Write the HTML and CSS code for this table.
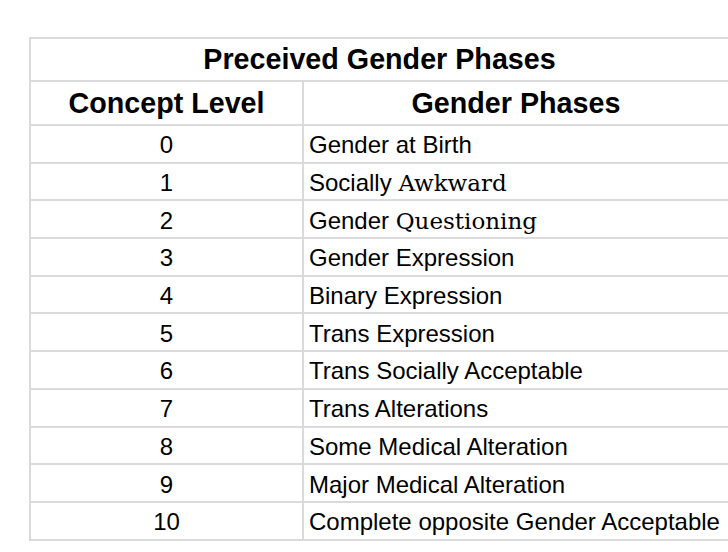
FILE: index.html
```html
<!DOCTYPE html>
<html lang="en">
<head>
<meta charset="utf-8">
<title>Preceived Gender Phases</title>
<link rel="stylesheet" href="styles.css">
</head>
<body>
<table class="phases">
  <colgroup>
    <col class="col-level">
    <col class="col-phase">
  </colgroup>
  <thead>
    <tr class="title-row"><th colspan="2">Preceived Gender Phases</th></tr>
    <tr class="head-row"><th>Concept Level</th><th>Gender Phases</th></tr>
  </thead>
  <tbody>
    <tr><td class="num">0</td><td>Gender at Birth</td></tr>
    <tr><td class="num">1</td><td>Socially <span class="serif">Awkward</span></td></tr>
    <tr><td class="num">2</td><td>Gender <span class="serif">Questioning</span></td></tr>
    <tr><td class="num">3</td><td>Gender Expression</td></tr>
    <tr><td class="num">4</td><td>Binary Expression</td></tr>
    <tr><td class="num">5</td><td>Trans Expression</td></tr>
    <tr><td class="num">6</td><td>Trans Socially Acceptable</td></tr>
    <tr><td class="num">7</td><td>Trans Alterations</td></tr>
    <tr><td class="num">8</td><td>Some Medical Alteration</td></tr>
    <tr><td class="num">9</td><td>Major Medical Alteration</td></tr>
    <tr><td class="num">10</td><td>Complete opposite Gender Acceptable</td></tr>
  </tbody>
</table>
</body>
</html>
```
FILE: styles.css
```css
html, body {
  margin: 0;
  padding: 0;
  background: #ffffff;
  overflow: hidden;
}
body {
  font-family: "Liberation Sans", Arial, sans-serif;
  color: #000000;
  padding: 37px 0 0 29px;
}
.phases {
  border-collapse: collapse;
  table-layout: fixed;
  width: 701px;
}
.col-level { width: 273px; }
.phases th,
.phases td {
  border: 2px solid #dadada;
  padding: 0 5px;
  vertical-align: middle;
  white-space: nowrap;
  line-height: 1;
}
.phases th {
  font-weight: bold;
  font-size: 28.7px;
  text-align: center;
}
.title-row { height: 43px; }
.head-row { height: 44px; }
.phases tbody tr { height: 37.7px; }
.phases td {
  font-size: 24px;
  text-align: left;
  padding-top: 3px;
}
.phases td.num { text-align: center; }
.serif {
  font-family: "DejaVu Serif", "Liberation Serif", serif;
  font-size: 23px;
}
```
